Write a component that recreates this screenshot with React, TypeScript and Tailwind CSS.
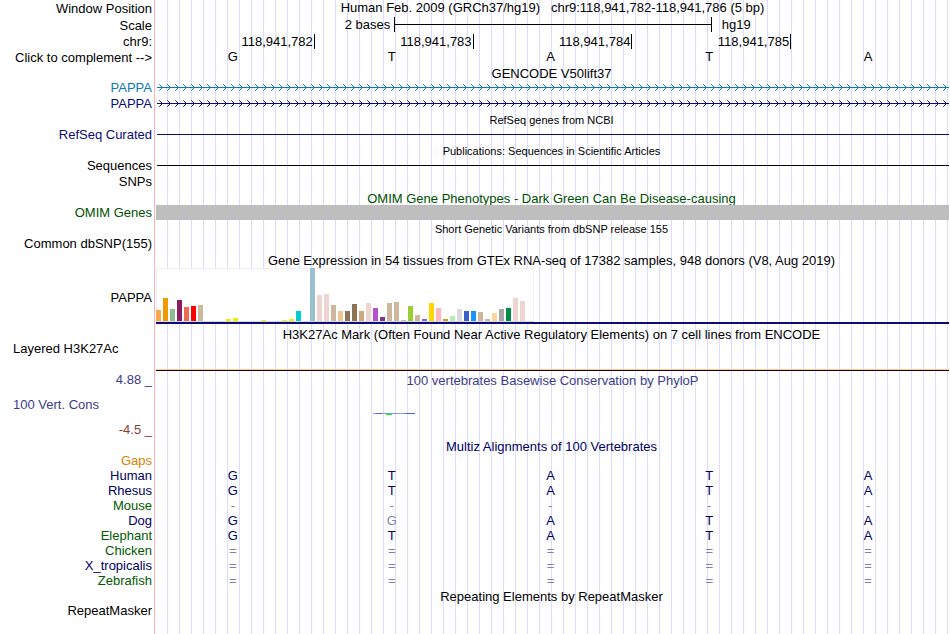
import React from 'react';

interface Species {
  name: string;
  labelColor: string;
  bases: string[];
}

interface TissueBar {
  height: number;
  color: string;
}

const POSITIONS = ['118,941,782', '118,941,783', '118,941,784', '118,941,785'];

const REFERENCE_BASES = ['G', 'T', 'A', 'T', 'A'];

const SPECIES: Species[] = [
  { name: 'Gaps', labelColor: 'text-[#e08000]', bases: [] },
  { name: 'Human', labelColor: 'text-[#000064]', bases: ['G', 'T', 'A', 'T', 'A'] },
  { name: 'Rhesus', labelColor: 'text-[#000064]', bases: ['G', 'T', 'A', 'T', 'A'] },
  { name: 'Mouse', labelColor: 'text-[#005a00]', bases: ['-', '-', '-', '-', '-'] },
  { name: 'Dog', labelColor: 'text-[#000064]', bases: ['G', 'G', 'A', 'T', 'A'] },
  { name: 'Elephant', labelColor: 'text-[#005a00]', bases: ['G', 'T', 'A', 'T', 'A'] },
  { name: 'Chicken', labelColor: 'text-[#005a00]', bases: ['=', '=', '=', '=', '='] },
  { name: 'X_tropicalis', labelColor: 'text-[#000064]', bases: ['=', '=', '=', '=', '='] },
  { name: 'Zebrafish', labelColor: 'text-[#005a00]', bases: ['=', '=', '=', '=', '='] },
];

const TISSUES: TissueBar[] = [
  { height: 11, color: '#ffa54f' },
  { height: 23, color: '#ee9a00' },
  { height: 12, color: '#8fbc8f' },
  { height: 21, color: '#8b1c62' },
  { height: 14, color: '#ee6a50' },
  { height: 15, color: '#ff0000' },
  { height: 16, color: '#cdb79e' },
  { height: 0, color: '#eeee00' },
  { height: 0, color: '#eeee00' },
  { height: 0, color: '#eeee00' },
  { height: 2, color: '#eeee00' },
  { height: 3, color: '#eeee00' },
  { height: 0, color: '#eeee00' },
  { height: 0, color: '#eeee00' },
  { height: 0, color: '#eeee00' },
  { height: 1, color: '#eeee00' },
  { height: 0, color: '#eeee00' },
  { height: 0, color: '#eeee00' },
  { height: 1, color: '#eeee00' },
  { height: 2, color: '#eeee00' },
  { height: 10, color: '#00cdcd' },
  { height: 0, color: '#9ac0cd' },
  { height: 53, color: '#9ac0cd' },
  { height: 26, color: '#eed5d2' },
  { height: 27, color: '#eed5d2' },
  { height: 16, color: '#cdb79e' },
  { height: 10, color: '#eec591' },
  { height: 10, color: '#8b7355' },
  { height: 17, color: '#8b7355' },
  { height: 10, color: '#cdaa7d' },
  { height: 18, color: '#eed5d2' },
  { height: 13, color: '#b452cd' },
  { height: 4, color: '#7a378b' },
  { height: 18, color: '#cdb79e' },
  { height: 19, color: '#cdb79e' },
  { height: 1, color: '#cdb79e' },
  { height: 15, color: '#9acd32' },
  { height: 6, color: '#cdb79e' },
  { height: 2, color: '#7a67ee' },
  { height: 18, color: '#ffd700' },
  { height: 13, color: '#ffb6c1' },
  { height: 2, color: '#cd9b1d' },
  { height: 5, color: '#b4eeb4' },
  { height: 12, color: '#d9d9d9' },
  { height: 10, color: '#3a5fcd' },
  { height: 10, color: '#1e90ff' },
  { height: 9, color: '#cdb79e' },
  { height: 2, color: '#cdb79e' },
  { height: 8, color: '#ffd39b' },
  { height: 12, color: '#a6a6a6' },
  { height: 13, color: '#008b45' },
  { height: 23, color: '#eed5d2' },
  { height: 20, color: '#eed5d2' },
  { height: 0, color: '#00ff00' },
];

interface RowProps {
  label?: string;
  labelClass?: string;
  className?: string;
  children?: React.ReactNode;
}

const Row: React.FC<RowProps> = ({ label, labelClass = 'pr-0.5 text-right', className = 'h-4', children }) => (
  <div className={`flex ${className}`}>
    <div className={`w-[154px] shrink-0 whitespace-nowrap ${labelClass}`}>{label}</div>
    <div className="min-w-0 flex-1 pl-0.5 pr-px">{children}</div>
  </div>
);

const Title: React.FC<{ className?: string; children: React.ReactNode }> = ({ className = '', children }) => (
  <h2 className={`ml-[154px] mr-px h-3.5 whitespace-pre text-center ${className}`}>{children}</h2>
);

const Bases: React.FC<{ bases: string[]; className?: string }> = ({ bases, className = 'text-[#000064]' }) => (
  <div className={`-mr-px grid grid-cols-5 text-center ${className}`}>
    {bases.map((base, i) => (
      <span key={i} className={`pr-[5px] ${base === REFERENCE_BASES[i] ? '' : 'text-[#8080b1]'}`}>
        {base}
      </span>
    ))}
  </div>
);

// Intron line with strand arrows every 8px
const StrandLine: React.FC<{ id: string; color: string }> = ({ id, color }) => (
  <svg className="block h-4 w-full pl-px" shapeRendering="crispEdges">
    <defs>
      <pattern id={id} width="8" height="16" patternUnits="userSpaceOnUse">
        <path d="M3 5h1v1h-1z M4 6h1v1h-1z M5 7h1v1h-1z M4 8h1v1h-1z M3 9h1v1h-1z" fill={color} />
        <path d="M2 4h1v1h-1z M2 10h1v1h-1z" fill={color} fillOpacity="0.7" />
      </pattern>
    </defs>
    <rect width="100%" height="16" fill={`url(#${id})`} />
    <rect y="7" width="100%" height="1" fill={color} />
  </svg>
);

const FlatLine: React.FC<{ className: string }> = ({ className }) => (
  <div className="pl-px pt-[7px]">
    <div className={`h-px ${className}`} />
  </div>
);

const ExpressionChart: React.FC = () => (
  <svg className="block" width="378" height="54" shapeRendering="crispEdges">
    <rect width="378" height="54" fill="#f0f0f0" />
    <rect x="1" y="1" width="376" height="52" fill="#ffffff" />
    <rect y="53" width="378" height="1" fill="#d8d8d8" />
    {TISSUES.map((tissue, i) => (
      <rect key={i} x={i * 7} y={53 - tissue.height} width="5" height={tissue.height} fill={tissue.color} />
    ))}
  </svg>
);

export default function App() {
  return (
    <main className="min-h-screen overflow-hidden bg-white bg-[linear-gradient(to_right,#fff_154px,#ffb4b4_154px,#ffb4b4_155px,#fff_155px,#fff_160px,transparent_160px),repeating-linear-gradient(to_right,transparent_0px,transparent_11px,#dcdcff_11px,#dcdcff_12px)] pt-px font-['Liberation_Sans',Arial,sans-serif] text-[13px] leading-[15px] text-black">
      <Row label="Window Position" className="h-[17px]">
        <h1 className="whitespace-pre text-center leading-[13px]">
          {'Human Feb. 2009 (GRCh37/hg19)   chr9:118,941,782-118,941,786 (5 bp)'}
        </h1>
      </Row>
      <Row label="Scale">
        <div className="-mr-px flex leading-[13px]">
          <div className="w-[30%] pr-1 text-right">2 bases</div>
          <div className="-mt-px flex h-[15px] w-[40%] items-center border-x border-black">
            <div className="h-px w-full bg-black" />
          </div>
          <div className="w-[30%] pl-2.5">hg19</div>
        </div>
      </Row>
      <Row label="chr9:">
        <div className="-mr-px grid grid-cols-5 text-right">
          {POSITIONS.map((position) => (
            <span key={position} className="border-r border-black pr-px">
              {position}
            </span>
          ))}
        </div>
      </Row>
      <Row label="Click to complement -->">
        <Bases bases={REFERENCE_BASES} className="leading-[13px]" />
      </Row>

      <section className="pb-px">
        <Title>GENCODE V50lift37</Title>
        <Row label="PAPPA" labelClass="pr-0.5 text-right text-[#0c78b4]">
          <StrandLine id="strand-a" color="#0c78b4" />
        </Row>
        <Row label="PAPPA" labelClass="pr-0.5 text-right text-[#0c0c78]">
          <StrandLine id="strand-b" color="#0c0c78" />
        </Row>
      </section>

      <section className="pb-px">
        <Title className="text-[11px]">RefSeq genes from NCBI</Title>
        <Row label="RefSeq Curated" labelClass="pr-0.5 text-right text-[#0c0c78]">
          <FlatLine className="bg-[#0c0c78]" />
        </Row>
      </section>

      <section className="pb-px">
        <Title className="text-[11px]">Publications: Sequences in Scientific Articles</Title>
        <Row label="Sequences">
          <FlatLine className="bg-black" />
        </Row>
        <Row label="SNPs" />
      </section>

      <section className="pb-px">
        <Title className="overflow-hidden text-[#005000]">
          OMIM Gene Phenotypes - Dark Green Can Be Disease-causing
        </Title>
        <Row label="OMIM Genes" labelClass="pr-0.5 text-right text-[#005000]">
          <div className="h-[15px] bg-[#bebebe]" />
        </Row>
      </section>

      <section className="pb-px">
        <Title className="text-[11px]">Short Genetic Variants from dbSNP release 155</Title>
        <Row label="Common dbSNP(155)" />
      </section>

      <section>
        <Title>Gene Expression in 54 tissues from GTEx RNA-seq of 17382 samples, 948 donors (V8, Aug 2019)</Title>
        <Row label="PAPPA" labelClass="pr-0.5 pt-[23px] text-right" className="h-[60px]">
          <div className="pt-px">
            <ExpressionChart />
            <div className="h-0.5 bg-[#0c0c78]" />
          </div>
        </Row>
      </section>

      <section>
        <Title>H3K27Ac Mark (Often Found Near Active Regulatory Elements) on 7 cell lines from ENCODE</Title>
        <Row label="Layered H3K27Ac" labelClass="pl-[13px]" className="h-8">
          <div className="pt-7">
            <div className="h-0.5 border-b border-[#200020] bg-[#ffc88c]" />
          </div>
        </Row>
      </section>

      <section>
        <Row label="4.88 _" labelClass="pr-0.5 text-right leading-[13px] text-[#3c3c8c]" className="h-[25px]">
          <h2 className="text-center text-[#3c3c8c]">100 vertebrates Basewise Conservation by PhyloP</h2>
        </Row>
        <Row label="100 Vert. Cons" labelClass="pl-[13px] leading-[13px] text-[#3c3c8c]" className="h-[25px]">
          <div className="grid grid-cols-5 pt-[15px]">
            <svg className="col-start-2 mx-auto block" width="42" height="2" shapeRendering="crispEdges">
              <rect width="42" height="1" fill="#8c96f0" />
              <rect x="3" width="6" height="1" fill="#5064e6" />
              <rect x="32" width="10" height="1" fill="#5064e6" />
              <rect x="13" y="1" width="6" height="1" fill="#00ff00" />
            </svg>
          </div>
        </Row>
        <Row label="-4.5 _" labelClass="pr-0.5 text-right leading-[13px] text-[#8c3c3c]" />
      </section>

      <section className="pb-px">
        <Title className="text-[#000064]">Multiz Alignments of 100 Vertebrates</Title>
        {SPECIES.map((species) => (
          <Row
            key={species.name}
            label={species.name}
            labelClass={`pr-0.5 text-right ${species.labelColor}`}
            className="h-[15px]"
          >
            <Bases bases={species.bases} />
          </Row>
        ))}
      </section>

      <section>
        <Title>Repeating Elements by RepeatMasker</Title>
        <Row label="RepeatMasker" />
      </section>
    </main>
  );
}
